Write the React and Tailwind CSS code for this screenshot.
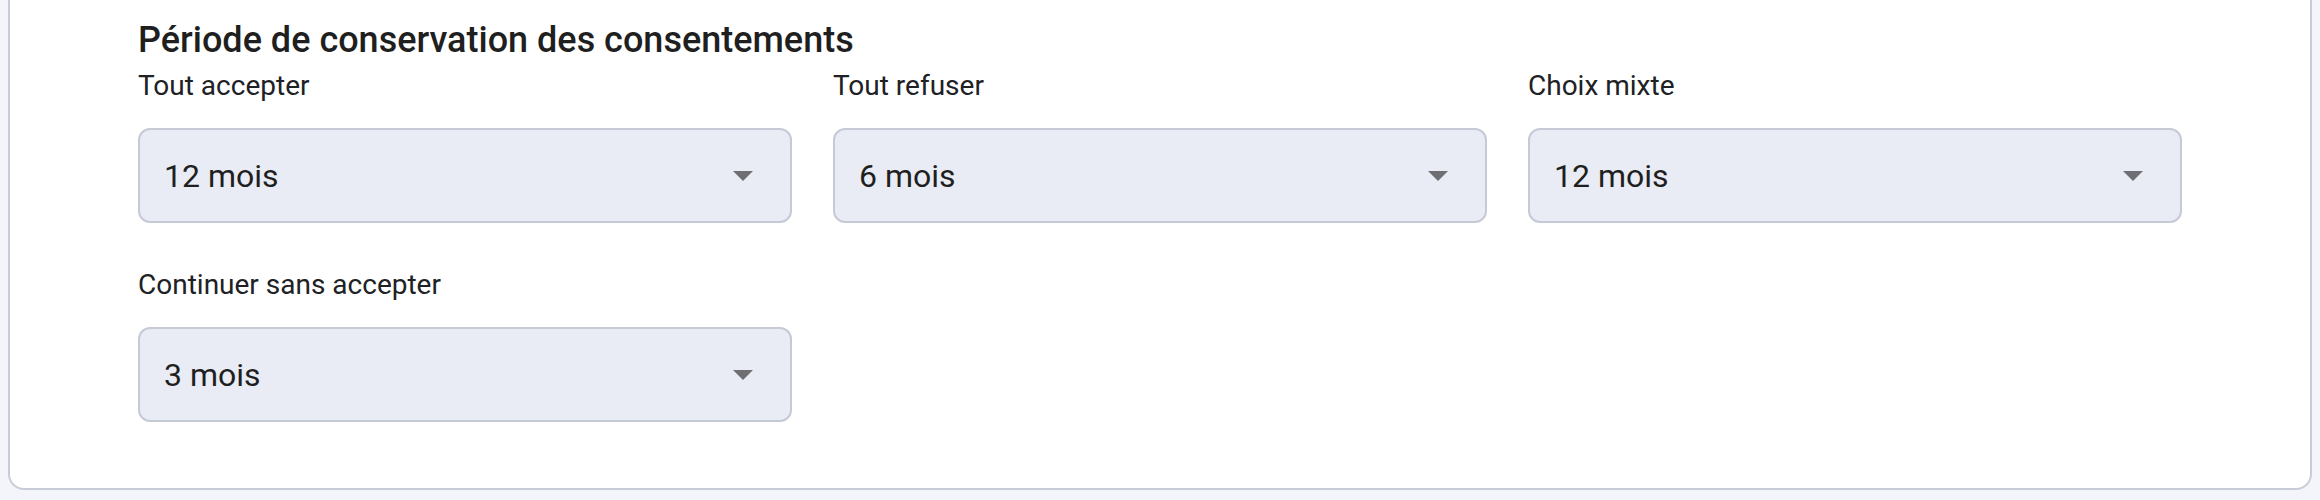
const rows = [
  [
    { label: "Tout accepter", value: "12 mois" },
    { label: "Tout refuser", value: "6 mois" },
    { label: "Choix mixte", value: "12 mois" },
  ],
  [{ label: "Continuer sans accepter", value: "3 mois" }],
];

function Caret() {
  return (
    <svg width="20" height="10" viewBox="0 0 20 10" className="shrink-0">
      <path d="M0 0 L20 0 L10 10 Z" fill="#6e6e73" />
    </svg>
  );
}

function SelectField({ label, value }) {
  return (
    <div className="flex flex-col">
      <label className="text-[28px] leading-[32px] text-[#202124]">{label}</label>
      <div className="mt-[26px] flex h-[95px] items-center justify-between rounded-[12px] border-2 border-[#c6cad6] bg-[#e9ecf4] pl-[24px] pr-[37px]">
        <span className="text-[32px] text-[#1f1f1f]">{value}</span>
        <Caret />
      </div>
    </div>
  );
}

export default function App() {
  return (
    <div
      className="min-h-[500px] bg-[#f4f5fa] px-[8px] pb-[10px]"
      style={{ fontFamily: "Roboto, 'Noto Sans', sans-serif" }}
    >
      <div className="rounded-b-[16px] border-2 border-t-0 border-[#c8ccd8] bg-white px-[128px] pt-[19px] pb-[66px]">
        <h2 className="text-[36px] font-medium leading-[42px] text-[#1f1f1f]">
          Période de conservation des consentements
        </h2>
        <div className="mt-[9px] flex flex-col gap-y-[46px]">
          {rows.map((row, i) => (
            <div key={i} className="grid grid-cols-3 gap-x-[41px]">
              {row.map((f) => (
                <SelectField key={f.label} {...f} />
              ))}
            </div>
          ))}
        </div>
      </div>
    </div>
  );
}
